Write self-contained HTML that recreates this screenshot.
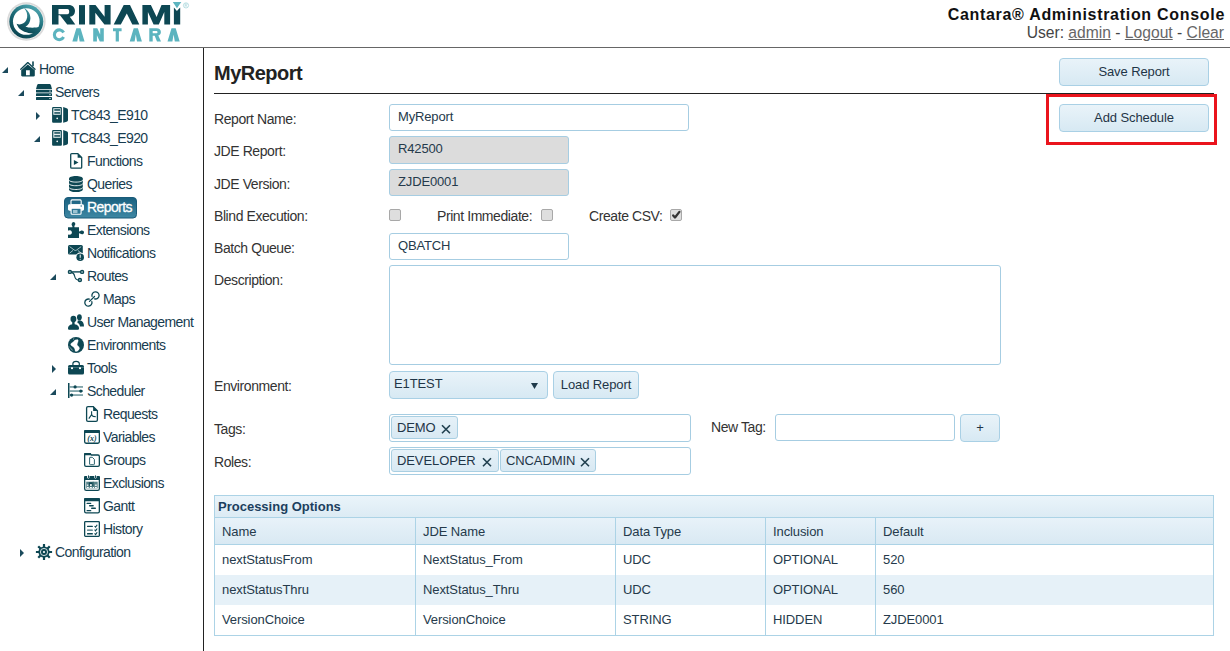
<!DOCTYPE html>
<html><head><meta charset="utf-8">
<style>
*{box-sizing:border-box;margin:0;padding:0}
html,body{width:1230px;height:651px;overflow:hidden;background:#fff;font-family:"Liberation Sans",sans-serif;font-size:13px;color:#333}
.a{position:absolute}
#hdrline{left:0;top:47px;width:1230px;height:1px;background:#666}
#vline{left:203px;top:48px;width:1px;height:603px;background:#222}
.ttl{right:5px;top:5.5px;font-weight:bold;font-size:16px;letter-spacing:0.7px;color:#111;white-space:nowrap}
.usr{right:6px;top:24px;font-size:15.65px;color:#444;white-space:nowrap}
.usr u{color:#666}
.tr{position:absolute;z-index:2;height:23px;line-height:23px;white-space:nowrap;color:#173c50;font-size:14px;letter-spacing:-0.6px}
.tg{position:absolute;width:0;height:0}
.ic{position:absolute;width:16px;height:16px}
h1{position:absolute;left:214px;top:61.5px;font-size:20px;letter-spacing:-0.5px;font-weight:bold;color:#222}
#tline{left:214px;top:93px;width:1000px;height:1px;background:#222}
.btn{position:absolute;border:1px solid #a9d0e5;border-radius:4px;background:linear-gradient(#e9f3f9,#d7e9f3);color:#1f3547;text-align:center;font-size:13px;letter-spacing:-0.1px}
.lbl{position:absolute;left:214px;font-size:14px;letter-spacing:-0.42px;color:#333;white-space:nowrap}
.inp{position:absolute;border:1px solid #a6cde2;border-radius:3px;background:#fff;color:#253a4b;padding-left:8px;font-size:13px;letter-spacing:-0.15px;line-height:24px}
.dis{background:#dcdcdc}
.cb{position:absolute;width:12px;height:12px;border:1px solid #a8a8a8;border-radius:2px;background:#dedede}
.chip{position:absolute;border:1px solid #a9cfe2;border-radius:3px;background:linear-gradient(#e6f1f8,#d8e9f3);color:#1f3547;padding-left:5px;line-height:21px;font-size:13px;letter-spacing:-0.1px;white-space:nowrap}
table{position:absolute;left:214px;top:495px;width:1000px;border-collapse:collapse;font-size:13px;color:#253a4b}
.cap{font-weight:bold;color:#1c3f5e;white-space:nowrap}
.td{white-space:nowrap;color:#253a4b;font-size:13px;letter-spacing:-0.1px}
</style></head><body>
<div class="a" id="hdrline"></div>
<div class="a" id="vline"></div>
<div class="a ttl">Cantara® Administration Console</div>
<div class="a usr">User: <u>admin</u> - <u>Logout</u> - <u>Clear</u></div>

<h1>MyReport</h1>
<div class="a" id="tline"></div>
<div class="btn" style="left:1059px;top:58px;width:150px;height:28px;line-height:26px">Save Report</div>
<div class="a" style="left:1046px;top:94px;width:171px;height:51px;border:3px solid #ea141d"></div>
<div class="btn" style="left:1059px;top:104px;width:150px;height:28px;line-height:26px">Add Schedule</div>

<div class="lbl" style="top:111px">Report Name:</div>
<div class="inp" style="left:389px;top:104px;width:300px;height:27px">MyReport</div>
<div class="lbl" style="top:143px">JDE Report:</div>
<div class="inp dis" style="left:389px;top:136px;width:180px;height:28px">R42500</div>
<div class="lbl" style="top:176px">JDE Version:</div>
<div class="inp dis" style="left:389px;top:169px;width:180px;height:27px">ZJDE0001</div>
<div class="lbl" style="top:208px">Blind Execution:</div>
<div class="cb" style="left:389px;top:209px"></div>
<div class="lbl" style="left:437px;top:208px">Print Immediate:</div>
<div class="cb" style="left:541px;top:209px"></div>
<div class="lbl" style="left:589px;top:208px">Create CSV:</div>
<div class="cb" style="left:670px;top:209px"></div>
<svg class="a" style="left:664px;top:204px" width="24" height="24"><path d="M9.2 11.4L11 13.5L15.4 7.9" fill="none" stroke="#333" stroke-width="2.3" stroke-linecap="round" stroke-linejoin="round"/></svg>
<div class="lbl" style="top:240px">Batch Queue:</div>
<div class="inp" style="left:389px;top:233px;width:180px;height:27px">QBATCH</div>
<div class="lbl" style="top:272px">Description:</div>
<div class="inp" style="left:389px;top:265px;width:612px;height:100px"></div>
<div class="lbl" style="top:378px">Environment:</div>
<div class="btn" style="left:389px;top:371px;width:159px;height:28px;line-height:24px;text-align:left;padding-left:4px">E1TEST</div>
<svg class="a" style="left:530px;top:382px" width="10" height="8"><path d="M1 1H8L4.5 7Z" fill="#1f3a4b"/></svg>
<div class="btn" style="left:553px;top:371px;width:86px;height:28px;line-height:26px">Load Report</div>
<div class="lbl" style="top:421px">Tags:</div>
<div class="inp" style="left:389px;top:414px;width:302px;height:28px"></div>
<div class="chip" style="left:391px;top:416px;width:67px;height:23px">DEMO</div>
<svg class="a" style="left:441px;top:424px" width="10" height="10"><path d="M1 1.2L9 9.2M9 1.2L1 9.2" stroke="#21404f" stroke-width="1.6"/></svg>
<div class="lbl" style="left:711px;top:419px">New Tag:</div>
<div class="inp" style="left:775px;top:414px;width:180px;height:27px"></div>
<div class="btn" style="left:960px;top:414px;width:40px;height:28px;line-height:26px">+</div>
<div class="lbl" style="top:454px">Roles:</div>
<div class="inp" style="left:389px;top:447px;width:302px;height:28px"></div>
<div class="chip" style="left:391px;top:449px;width:108px;height:23px">DEVELOPER</div>
<svg class="a" style="left:482px;top:457px" width="10" height="10"><path d="M1 1.2L9 9.2M9 1.2L1 9.2" stroke="#21404f" stroke-width="1.6"/></svg>
<div class="chip" style="left:500px;top:449px;width:96px;height:23px">CNCADMIN</div>
<svg class="a" style="left:580px;top:457px" width="10" height="10"><path d="M1 1.2L9 9.2M9 1.2L1 9.2" stroke="#21404f" stroke-width="1.6"/></svg>


<div class="a" style="left:214px;top:495px;width:1000px;height:141px;border:1px solid #acd3e6"></div>
<div class="a" style="left:215px;top:496px;width:998px;height:21px;background:linear-gradient(#eaf4fa,#dcebf4)"></div>
<div class="a" style="left:215px;top:517px;width:998px;height:1px;background:#acd3e6"></div>
<div class="a" style="left:215px;top:518px;width:998px;height:26px;background:linear-gradient(#e8f2f9,#d9e9f3)"></div>
<div class="a" style="left:215px;top:544px;width:998px;height:1px;background:#acd3e6"></div>
<div class="a" style="left:215px;top:575px;width:998px;height:30px;background:#e6f1f8"></div>
<div class="a" style="left:415px;top:518px;width:1px;height:117px;background:#acd3e6"></div>
<div class="a" style="left:615px;top:518px;width:1px;height:117px;background:#acd3e6"></div>
<div class="a" style="left:765px;top:518px;width:1px;height:117px;background:#acd3e6"></div>
<div class="a" style="left:875px;top:518px;width:1px;height:117px;background:#acd3e6"></div>
<div class="a cap" style="left:218px;top:499px">Processing Options</div>
<div class="a td" style="left:222px;top:524px">Name</div>
<div class="a td" style="left:423px;top:524px">JDE Name</div>
<div class="a td" style="left:623px;top:524px">Data Type</div>
<div class="a td" style="left:773px;top:524px">Inclusion</div>
<div class="a td" style="left:883px;top:524px">Default</div>
<div class="a td" style="left:222px;top:552px">nextStatusFrom</div>
<div class="a td" style="left:423px;top:552px">NextStatus_From</div>
<div class="a td" style="left:623px;top:552px">UDC</div>
<div class="a td" style="left:773px;top:552px">OPTIONAL</div>
<div class="a td" style="left:883px;top:552px">520</div>
<div class="a td" style="left:222px;top:582px">nextStatusThru</div>
<div class="a td" style="left:423px;top:582px">NextStatus_Thru</div>
<div class="a td" style="left:623px;top:582px">UDC</div>
<div class="a td" style="left:773px;top:582px">OPTIONAL</div>
<div class="a td" style="left:883px;top:582px">560</div>
<div class="a td" style="left:222px;top:612px">VersionChoice</div>
<div class="a td" style="left:423px;top:612px">VersionChoice</div>
<div class="a td" style="left:623px;top:612px">STRING</div>
<div class="a td" style="left:773px;top:612px">HIDDEN</div>
<div class="a td" style="left:883px;top:612px">ZJDE0001</div>
<div class="tr" style="left:39px;top:58px">Home</div>
<div class="tr" style="left:55px;top:81px">Servers</div>
<div class="tr" style="left:71px;top:104px">TC843_E910</div>
<div class="tr" style="left:71px;top:127px">TC843_E920</div>
<div class="tr" style="left:87px;top:150px">Functions</div>
<div class="tr" style="left:87px;top:173px">Queries</div>
<div class="tr" style="left:87px;top:196px;color:#fff;-webkit-text-stroke:0.3px #fff">Reports</div>
<div class="tr" style="left:87px;top:219px">Extensions</div>
<div class="tr" style="left:87px;top:242px">Notifications</div>
<div class="tr" style="left:87px;top:265px">Routes</div>
<div class="tr" style="left:103px;top:288px">Maps</div>
<div class="tr" style="left:87px;top:311px">User Management</div>
<div class="tr" style="left:87px;top:334px">Environments</div>
<div class="tr" style="left:87px;top:357px">Tools</div>
<div class="tr" style="left:87px;top:380px">Scheduler</div>
<div class="tr" style="left:103px;top:403px">Requests</div>
<div class="tr" style="left:103px;top:426px">Variables</div>
<div class="tr" style="left:103px;top:449px">Groups</div>
<div class="tr" style="left:103px;top:472px">Exclusions</div>
<div class="tr" style="left:103px;top:495px">Gantt</div>
<div class="tr" style="left:103px;top:518px">History</div>
<div class="tr" style="left:55px;top:541px">Configuration</div>
<svg class="a" style="left:0;top:0" width="200" height="46" viewBox="0 0 200 46">
<defs>
<linearGradient id="lg" x1="0.75" y1="0.05" x2="0.25" y2="0.95">
<stop offset="0" stop-color="#4ea6b0"/><stop offset="0.45" stop-color="#1d6c78"/><stop offset="1" stop-color="#0b4551"/>
</linearGradient>
</defs>
<circle cx="26.3" cy="21.5" r="19.3" fill="#dadada"/>
<circle cx="26.3" cy="21.5" r="17.8" fill="#ededed"/>
<circle cx="26.3" cy="21.5" r="17" fill="url(#lg)"/>
<circle cx="26.3" cy="21.5" r="13.3" fill="#fff"/>
<path fill="url(#lg)" d="M24.15 8.27C27.5 9.5 30.4 13.5 30.43 18.17C30.4 21.5 28.5 25 25.48 26.76C28.5 27.8 35 28.2 40.5 26.5L40 31.5C37.5 33 34.5 33.6 32.7 33.4C27 33.2 21 31 18.5 27.5C17.6 26.3 17 25 16.56 23.79C18.5 24.6 20 24.6 21.51 24.12C24 23.5 26.5 21 27.13 17.51C27.6 14.5 26.8 11 24.15 8.27Z"/>
<g fill="#0d4753">
<path d="M52 5.1H68.5C72.8 5.1 75 7.8 75 11C75 14.2 73 16.3 69.8 16.8L75.3 24.5H67.2L60 15.2H58.5V24.5H52ZM58.5 9.1H67.3C68.7 9.1 69.2 10.1 69.2 11.65C69.2 13.2 68.7 14.2 67.3 14.2H58.5Z" fill-rule="evenodd"/>
<rect x="79" y="5.1" width="6" height="19.4"/>
<path d="M89.3 5.1H95.5L104.6 16.8V5.1H110.6V24.5H104.4L95.3 12.8V24.5H89.3Z"/>
<path d="M123.7 5.1H130L139.3 24.5H132.3L126.8 13.6L120.8 24.5H113.7Z"/>
<path d="M142.4 5.1H150.9L156.6 17.1L161.5 5.1H170.1V24.4H164.3V12L158.8 24.4H153.6L147.9 12V24.4H142.4Z"/>
<path d="M173.9 7.4L176.9 10.9L180.2 7.4V24.4H173.9Z"/>
</g>
<g fill="#5cb4bf">
<path d="M172.8 2H181.3L176.95 8.3Z"/>
<circle cx="186" cy="5.4" r="2.6" fill="none" stroke="#9fd2d8" stroke-width="0.7"/><path d="M185.1 6.9V3.9H186.3C187.3 3.9 187.3 5.3 186.3 5.3H185.1M186.2 5.3L187 6.9" fill="none" stroke="#9fd2d8" stroke-width="0.55"/>
<path d="M63.6 32.5A4.9 4.9 0 1 0 63.6 37.1" fill="none" stroke="#5cb4bf" stroke-width="3.1"/>
<path d="M76.35 28.3H80.55L84.55 41.5H79.65L78.45 34.4L77.25 41.5H72.35Z"/>
<path d="M93.2 28.3H97.3L100.2 34.4V28.3H103.8V41.5H99.8L96.9 35.3V41.5H93.2Z"/>
<path d="M113 28.3H121.6V31.2H118.9V41.5H115.7V31.2H113Z"/>
<path d="M133.70 28.3H137.90L141.90 41.5H137.00L135.80 34.4L134.60 41.5H129.70Z"/>
<path d="M149.3 28.3H156.5C159.3 28.3 160.9 30 160.9 32C160.9 33.8 160 35 158.3 35.5L161 41.6H157L154.7 35.8H152.7V41.6H149.3ZM152.7 31H156C157 31 157.5 31.5 157.5 32.2C157.5 32.9 157 33.3 156 33.3H152.7Z" fill-rule="evenodd"/>
<path d="M171.50 28.3H175.70L179.70 41.5H174.80L173.60 34.4L172.40 41.5H167.50Z"/>
</g>
</svg>

<svg class="a" style="left:0;top:0" width="203" height="651" viewBox="0 0 203 651">
<defs>
<linearGradient id="hl" x1="0" y1="0" x2="0" y2="1"><stop offset="0" stop-color="#19607f"/><stop offset="1" stop-color="#3f88a4"/></linearGradient>
</defs>
<g fill="#1b4a5c">
<path d="M8 67V73H2Z"/>
<path d="M24 90V96H18Z"/>
<path d="M36 112L40 116L36 120Z"/>
<path d="M40 136V142H34Z"/>
<path d="M56 274V280H50Z"/>
<path d="M52 365L56 369L52 373Z"/>
<path d="M56 389V395H50Z"/>
<path d="M20 549L24 553L20 557Z"/>
</g>
<rect x="64.5" y="197.5" width="72" height="20.5" rx="3.5" fill="url(#hl)" stroke="#1a5b79" stroke-width="1"/>
<g fill="#0d4753" stroke="none">
<!-- home -->
<path d="M20.8 69.3L27.8 62.6L35 69.3" fill="none" stroke="#0d4753" stroke-width="1.35" stroke-linecap="round" stroke-linejoin="round"/>
<rect x="32.2" y="61.3" width="1.6" height="5" rx="0.6"/>
<path d="M21.2 70.2L27.8 64.4L34.8 70.2V75.2C34.8 76 34.4 76.4 33.6 76.4H22.4C21.6 76.4 21.2 76 21.2 75.2ZM26 70.3V75.2H29.8V70.3Z" fill-rule="evenodd"/>
<!-- servers stack -->
<path d="M38.6 84H49.4C50.2 84 50.6 84.5 50.9 85.3L52 88.9H36L37.1 85.3C37.4 84.5 37.8 84 38.6 84Z"/>
<rect x="36" y="89.7" width="16" height="2.8" rx="0.4"/>
<rect x="36" y="93.3" width="16" height="2.8" rx="0.4"/>
<rect x="36" y="96.9" width="16" height="3.1" rx="0.5"/>
<g fill="#fff"><rect x="49.4" y="90.6" width="1.2" height="1"/><rect x="49.4" y="94.2" width="1.2" height="1"/><rect x="49.4" y="98" width="1.2" height="1"/></g>
<!-- server towers -->
<g id="tw">
<rect x="52.1" y="107" width="9.8" height="15.7" rx="1"/>
<rect x="53.3" y="108.2" width="7.4" height="6.6" fill="#e8f0f1"/>
<rect x="54.3" y="109.2" width="5.8" height="1.5"/>
<rect x="54.3" y="112.2" width="5.8" height="1.5"/>
<circle cx="57.2" cy="118.4" r="0.8" fill="#fff"/>
<path d="M63.2 107.1L66.6 108.2C67.5 108.5 68 109.1 68 110V120C68 120.9 67.5 121.5 66.6 121.8L63.2 122.7Z"/>
</g>
<use href="#tw" y="23"/>
<!-- functions -->
<path d="M71.8 153.6H77.8L81.7 157.6V167.2C81.7 167.8 81.3 168.2 80.7 168.2H71.8C71.2 168.2 70.7 167.8 70.7 167.2V154.6C70.7 154 71.2 153.6 71.8 153.6Z" fill="none" stroke="#0d4753" stroke-width="1.3"/>
<path d="M77.6 153.4L82 157.8H77.6Z"/>
<path d="M73.9 159.9L78.5 162.4L73.9 164.9Z"/>
<!-- queries -->
<path d="M69 178.6C69 177.1 72.1 176 75.9 176C79.7 176 82.8 177.1 82.8 178.6V189.4C82.8 190.9 79.7 192 75.9 192C72.1 192 69 190.9 69 189.4Z"/>
<g fill="none" stroke="#fff" stroke-width="0.9">
<path d="M69 180C69 181.2 72.1 182.1 75.9 182.1C79.7 182.1 82.8 181.2 82.8 180"/>
<path d="M69 183.6C69 184.8 72.1 185.7 75.9 185.7C79.7 185.7 82.8 184.8 82.8 183.6"/>
<path d="M69 187.4C69 188.6 72.1 189.5 75.9 189.5C79.7 189.5 82.8 188.6 82.8 187.4"/>
</g>
<!-- printer (white) -->
<g fill="#fff">
<rect x="71" y="199.9" width="10.2" height="5" rx="1" fill="none" stroke="#fff" stroke-width="1.1"/>
<path d="M69.5 204.3H82.5C83.3 204.3 84 205 84 205.8V209.3C84 210.1 83.3 210.7 82.5 210.7H69.5C68.7 210.7 68 210.1 68 209.3V205.8C68 205 68.7 204.3 69.5 204.3Z"/>
<rect x="71.1" y="208.3" width="10" height="5.9" rx="1" fill="#2f7896" stroke="#fff" stroke-width="1.1"/>
<rect x="73" y="210" width="4.5" height="3" fill="#9cc3d2"/>
<circle cx="81.2" cy="206.1" r="0.75" fill="#2b6f8c"/>
</g>
<!-- puzzle -->
<path d="M68 227.2H72.4C72.6 226.4 72.2 226 71.8 225.3C71.4 224.6 71.5 223.9 71.9 223.3C72.3 222.5 72.9 222.1 73.4 222.1C74.4 222.1 75.3 222.9 75.3 223.9C75.3 224.6 74.9 225.1 74.6 225.5C74.3 226 74.3 226.6 74.5 227.2H79V231.4C79.6 231.6 80 231.2 80.5 230.9C80.9 230.7 81.4 230.6 82 230.6C83.1 230.6 84 231.4 84 232.4C84 233.4 83.1 234.2 82 234.2C81.4 234.2 80.9 234 80.5 233.8C80 233.6 79.6 233.2 79 233.4V238H68V234.4C68.6 234.4 69.3 234.8 70 234.6C71.1 234.4 71.9 233.5 71.9 232.4C71.9 231.3 71.1 230.4 70 230.2C69.3 230 68.6 230.4 68 230.4Z"/>
<!-- envelope -->
<rect x="68" y="245" width="14.8" height="9.6" rx="1.5"/>
<g fill="none" stroke="#c9dadd" stroke-width="0.8">
<path d="M69.6 246.6L74.2 250C75 250.6 75.8 250.6 76.6 250L81.2 246.6"/>
<path d="M69.6 253.2L73 250.4M81.2 253.2L77.8 250.4"/>
</g>
<circle cx="80.2" cy="257.2" r="4.7" fill="#fff"/>
<circle cx="80.2" cy="257.2" r="3.8"/>
<rect x="79.7" y="254.6" width="1" height="3.2" fill="#fff"/>
<circle cx="80.2" cy="259.2" r="0.55" fill="#fff"/>
<!-- routes -->
<path d="M71.5 271.9H80.5" stroke="#0d4753" stroke-width="1.4" fill="none"/>
<path d="M71.2 272.3C73.2 272.6 74.2 273.8 74.6 276C75.1 278.6 76.2 279.8 78.3 280.1" stroke="#0d4753" stroke-width="1.2" fill="none"/>
<g fill="#7ea3a9" stroke="#0d4753" stroke-width="1.2">
<circle cx="69.9" cy="271.9" r="1.6"/><circle cx="82.1" cy="271.9" r="1.6"/><circle cx="79.9" cy="280" r="1.6"/>
</g>
<!-- link -->
<g fill="none" stroke="#0d4753" stroke-width="1.3" stroke-linecap="round">
<path d="M91.88 301.67A3.6 3.6 0 1 1 89.33 299.12"/>
<path d="M92.02 296.33A3.6 3.6 0 1 1 94.57 298.88"/>
<path d="M89.5 301.4L94.5 296.5"/>
</g>
<!-- users -->
<g>
<ellipse cx="79.4" cy="317.3" rx="2.4" ry="3.1"/>
<path d="M77.8 320.6H80.6C82.8 321.4 84 323.3 84 326.4H80C79.6 324.6 78.8 323.4 77.4 322.8Z"/>
</g>
<g stroke="#fff" stroke-width="1.2">
<ellipse cx="73.4" cy="319" rx="2.9" ry="3.3"/>
<path d="M68 328.4C68 325.8 70.5 324.3 73.5 324.3C76.5 324.3 79 325.8 79 328.4C79 329.4 78.3 329.8 77.4 329.8H69.6C68.7 329.8 68 329.4 68 328.4Z"/>
</g>
<ellipse cx="73.4" cy="319" rx="2.9" ry="3.3"/>
<rect x="72.2" y="321" width="2.4" height="4"/>
<path d="M68 328.4C68 325.8 70.5 324.3 73.5 324.3C76.5 324.3 79 325.8 79 328.4C79 329.4 78.3 329.8 77.4 329.8H69.6C68.7 329.8 68 329.4 68 328.4Z"/>
<!-- globe -->
<circle cx="76" cy="345" r="8"/>
<path fill="#fff" stroke="#fff" stroke-width="0.3" stroke-linejoin="round" d="M74.91 340.07 L77.67 339.61 L78.29 340.68 L77.67 342.68 L77.06 344.22 L77.67 345.75 L78.9 346.67 L79.52 348.21 L78.9 349.75 L77.67 350.98 L76.14 351.59 L75.22 351.28 L74.91 349.44 L74.29 347.9 L73.07 346.67 L71.22 345.45 L70.61 344.22 L71.53 342.99 L73.07 342.07 L74.29 340.84Z"/>
<path fill="none" stroke="#fff" stroke-width="0.7" stroke-dasharray="1 0.6" d="M69.4 346.7L72.8 350.7M73.2 339.2L74.6 338.6"/>
<!-- toolbox -->
<path d="M72.9 365V363.6C72.9 361.9 74.2 361.3 76.1 361.3C78 361.3 79.3 361.9 79.3 363.6V365" fill="none" stroke="#0d4753" stroke-width="1.2"/>
<rect x="68" y="364.9" width="16" height="9.7" rx="1.6"/>
<rect x="68" y="367.3" width="16" height="0.45" fill="#7fa3a9"/>
<g fill="#fff"><rect x="71" y="367.3" width="2" height="1.8"/><rect x="79" y="367.3" width="2" height="1.8"/></g>
<!-- scheduler -->
<rect x="68" y="383" width="1.5" height="15"/>
<g fill="#4f7f87"><rect x="69.5" y="386.3" width="13.5" height="1.3"/><rect x="69.5" y="390.4" width="13.5" height="1.3"/><rect x="69.5" y="394.4" width="13.5" height="1.3"/></g>
<circle cx="75.1" cy="386.95" r="1.6"/><circle cx="80.8" cy="391.05" r="1.6"/><circle cx="71.6" cy="395.05" r="1.6"/>
<!-- requests pdf -->
<path d="M88 406.7H93.3L97.4 410.8V420C97.4 420.8 96.8 421.4 96 421.4H88C87.2 421.4 86.6 420.8 86.6 420V408.1C86.6 407.3 87.2 406.7 88 406.7Z" fill="none" stroke="#0d4753" stroke-width="1.3"/>
<path d="M93.1 406.4L97.7 411H93.1Z"/>
<path d="M91.6 411.2V413.8C91.6 415 92.2 416 93.2 416.4L95.8 416.8M91.6 414.6L88.8 418.6" fill="none" stroke="#0d4753" stroke-width="1.1"/>
<!-- variables -->
<rect x="84.65" y="430.65" width="14.7" height="12.6" rx="1.4" fill="none" stroke="#0d4753" stroke-width="1.3"/>
<rect x="84" y="430" width="16" height="3" rx="1"/>
<text x="92" y="440.8" font-family="Liberation Serif" font-style="italic" font-weight="bold" font-size="8" text-anchor="middle" fill="#0d4753">(x)</text>
<!-- groups -->
<path d="M86 453.7H90.2L91.3 455H98C98.8 455 99.35 455.6 99.35 456.4V465C99.35 465.8 98.8 466.35 98 466.35H86C85.2 466.35 84.65 465.8 84.65 465V455.1C84.65 454.3 85.2 453.7 86 453.7Z" fill="none" stroke="#0d4753" stroke-width="1.3"/>
<rect x="84" y="453" width="7" height="2.2" rx="0.8"/>
<path d="M89.8 457.3H92.3L94.4 459.4V464C94.4 464.5 94.1 464.7 93.7 464.7H90.3C89.9 464.7 89.6 464.5 89.6 464V457.8Z" fill="none" stroke="#2d6470" stroke-width="1"/>
<!-- exclusions -->
<rect x="84.65" y="476.65" width="14.7" height="13.7" rx="1.6" fill="none" stroke="#0d4753" stroke-width="1.3"/>
<rect x="84" y="476.1" width="16" height="3.8" rx="1.2"/>
<g fill="#fff"><rect x="87.1" y="475" width="2.4" height="3.4" rx="0.8"/><rect x="94.3" y="475" width="2.3" height="3.4" rx="0.8"/></g>
<rect x="88" y="475" width="0.95" height="3.1" rx="0.4"/><rect x="95" y="475" width="0.95" height="3.1" rx="0.4"/>
<rect x="86.2" y="481.7" width="11.5" height="6.7" fill="#5a858c"/>
<rect x="88.8" y="482.3" width="3.9" height="3.9" fill="#0d4753"/>
<rect x="92.7" y="481.7" width="0.9" height="5" fill="#2e6068"/>
<g fill="#fff"><rect x="89.9" y="484.2" width="1.9" height="1.7"/><rect x="86.9" y="484.6" width="1.4" height="1.2"/><rect x="94.9" y="484.6" width="1.9" height="1.2"/>
<rect x="86.9" y="487" width="1.9" height="1.1"/><rect x="89.9" y="487" width="1.9" height="1.1"/><rect x="92.9" y="487" width="1.1" height="1.1"/><rect x="94.9" y="487" width="1.9" height="1.1"/></g>
<!-- gantt -->
<rect x="84.65" y="498.65" width="14.7" height="14.3" rx="1.4" fill="none" stroke="#0d4753" stroke-width="1.3"/>
<rect x="84" y="498" width="16" height="3.2" rx="1"/>
<rect x="86.5" y="502.8" width="4.8" height="1.3" rx="0.6"/>
<rect x="89" y="505.1" width="4.8" height="1.3" rx="0.6"/>
<rect x="91.1" y="507.6" width="4.8" height="1.5" rx="0.6"/>
<rect x="86.5" y="510" width="4.8" height="1.3" rx="0.6"/>
<!-- history -->
<rect x="84.65" y="521.65" width="14.7" height="14.7" rx="0.8" fill="none" stroke="#0d4753" stroke-width="1.3"/>
<rect x="87" y="525.7" width="5.9" height="1.3" rx="0.5"/>
<rect x="87" y="529.4" width="5.9" height="1.3" rx="0.5" fill="#3c6d76"/>
<rect x="87" y="533.1" width="5.9" height="1.3" rx="0.5"/>
<g fill="none" stroke="#0d4753" stroke-width="1.1"><path d="M94.6 526L95.6 527.2L97.2 524.8"/><path d="M94.6 529.7L95.6 530.9L97.2 528.5"/><path d="M94.6 533.4L95.6 534.6L97.2 532.2"/></g>
<!-- gear -->
<g transform="translate(44 552)">
<rect x="-1.1" y="-8.1" width="2.2" height="16.2" rx="0.3"/>
<rect x="-1.1" y="-8.1" width="2.2" height="16.2" rx="0.3" transform="rotate(45)"/>
<rect x="-1.1" y="-8.1" width="2.2" height="16.2" rx="0.3" transform="rotate(90)"/>
<rect x="-1.1" y="-8.1" width="2.2" height="16.2" rx="0.3" transform="rotate(135)"/>
<circle r="5.6"/>
<circle r="3.6" fill="none" stroke="#fff" stroke-width="0.8"/>
<circle r="1.9" fill="none" stroke="#0d4753" stroke-width="0"/>
<circle r="1.1" fill="#fff"/>
</g>
</g>
</svg>

</body></html>
